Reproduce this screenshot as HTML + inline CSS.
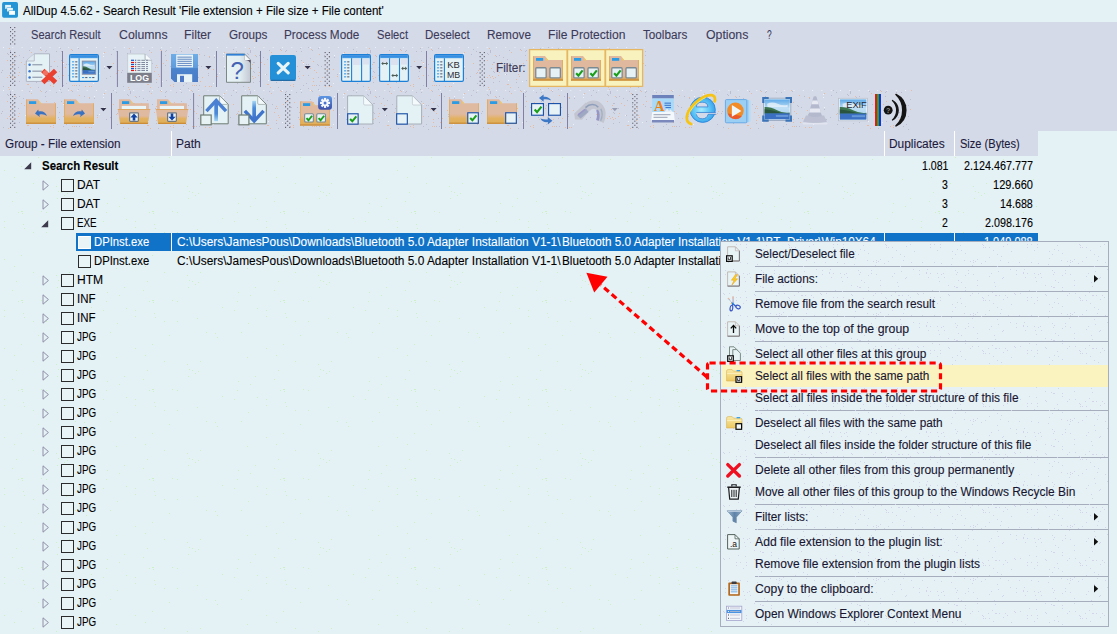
<!DOCTYPE html>
<html><head><meta charset="utf-8"><title>AllDup</title>
<style>
html,body{margin:0;padding:0;}
body{width:1117px;height:634px;overflow:hidden;background:#e4f1f5;position:relative;font-family:"Liberation Sans",sans-serif;}
#w{position:absolute;left:0;top:0;width:1117px;height:634px;overflow:hidden;}
#w div,#w svg,#w span{position:absolute;display:block;}
#w span{white-space:pre;line-height:1;-webkit-text-stroke:0.1px;transform-origin:0 0;}
</style></head><body><div id="w">
<div style="left:0px;top:0px;width:1117px;height:22px;background:#e4f1f5;"></div>
<div style="left:0px;top:22px;width:1117px;height:109px;background:#d5dae8;"></div>
<div style="left:0px;top:131px;width:1038px;height:25px;background:#d5dae8;"></div>
<div style="left:171px;top:131px;width:1px;height:25px;background:#fff;"></div>
<div style="left:884px;top:131px;width:1px;height:25px;background:#fff;"></div>
<div style="left:954px;top:131px;width:1px;height:25px;background:#fff;"></div>
<svg style="left:0;top:0" width="1117" height="634" viewBox="0 0 1117 634"><defs><pattern id="nz" width="120" height="41" patternUnits="userSpaceOnUse"><path d="M41 9h1v1h-1zM50 3h1v1h-1zM9 34h1v1h-1zM12 23h1v1h-1zM74 3h1v1h-1zM116 32h1v1h-1zM27 2h1v1h-1zM11 27h1v1h-1zM53 4h1v1h-1zM30 5h1v1h-1zM70 27h1v1h-1zM7 36h1v1h-1zM15 14h1v1h-1zM80 40h1v1h-1zM74 3h1v1h-1zM73 37h1v1h-1zM50 3h1v1h-1zM28 2h1v1h-1zM71 8h1v1h-1zM37 26h1v1h-1zM18 34h1v1h-1zM15 36h1v1h-1zM39 35h1v1h-1zM104 11h1v1h-1zM13 37h1v1h-1zM73 40h1v1h-1zM24 23h1v1h-1zM12 35h1v1h-1zM91 4h1v1h-1zM72 3h1v1h-1zM79 13h1v1h-1zM63 34h1v1h-1zM54 20h1v1h-1zM59 37h1v1h-1zM118 29h1v1h-1zM46 19h1v1h-1zM31 11h1v1h-1zM89 15h1v1h-1zM10 36h1v1h-1zM38 33h1v1h-1zM63 21h1v1h-1zM93 28h1v1h-1zM36 38h1v1h-1zM9 7h1v1h-1zM65 26h1v1h-1zM21 21h1v1h-1zM19 31h1v1h-1zM53 2h1v1h-1zM85 4h1v1h-1zM97 35h1v1h-1zM73 20h1v1h-1zM43 22h1v1h-1zM76 31h1v1h-1zM74 29h1v1h-1zM8 5h1v1h-1zM34 30h1v1h-1zM89 4h1v1h-1zM7 19h1v1h-1zM82 36h1v1h-1zM87 28h1v1h-1zM36 24h1v1h-1zM113 22h1v1h-1z" fill="#ebb088"/><path d="M2 29h1v1h-1zM45 10h1v1h-1zM78 7h1v1h-1zM63 3h1v1h-1zM27 18h1v1h-1zM16 15h1v1h-1zM50 25h1v1h-1zM117 31h1v1h-1zM10 10h1v1h-1zM57 25h1v1h-1zM70 17h1v1h-1zM113 8h1v1h-1zM104 27h1v1h-1zM110 35h1v1h-1zM35 26h1v1h-1zM45 24h1v1h-1zM29 9h1v1h-1zM10 11h1v1h-1zM19 14h1v1h-1zM84 14h1v1h-1zM1 31h1v1h-1zM106 37h1v1h-1zM23 16h1v1h-1zM36 0h1v1h-1zM18 26h1v1h-1zM68 23h1v1h-1zM78 36h1v1h-1zM40 8h1v1h-1zM88 32h1v1h-1zM79 3h1v1h-1zM58 35h1v1h-1zM50 25h1v1h-1zM51 25h1v1h-1zM13 30h1v1h-1zM81 25h1v1h-1zM7 12h1v1h-1zM8 13h1v1h-1zM56 10h1v1h-1zM14 21h1v1h-1zM76 3h1v1h-1zM13 0h1v1h-1zM72 9h1v1h-1zM68 6h1v1h-1zM46 39h1v1h-1zM3 4h1v1h-1zM111 13h1v1h-1zM78 24h1v1h-1zM19 40h1v1h-1zM32 22h1v1h-1zM77 23h1v1h-1zM60 7h1v1h-1zM14 31h1v1h-1zM59 30h1v1h-1zM61 19h1v1h-1zM10 9h1v1h-1zM13 21h1v1h-1zM94 16h1v1h-1zM61 10h1v1h-1zM66 1h1v1h-1zM26 33h1v1h-1zM46 9h1v1h-1zM88 34h1v1h-1zM117 1h1v1h-1zM97 33h1v1h-1zM38 5h1v1h-1zM89 16h1v1h-1zM66 23h1v1h-1zM116 10h1v1h-1zM45 14h1v1h-1zM68 34h1v1h-1z" fill="#b3b5c6"/><path d="M99 32h1v1h-1zM42 40h1v1h-1zM28 39h1v1h-1zM103 12h1v1h-1zM103 15h1v1h-1zM104 25h1v1h-1zM94 14h1v1h-1zM25 33h1v1h-1zM63 22h1v1h-1zM93 1h1v1h-1z" fill="#f6f8fb"/></pattern><pattern id="nm" width="97" height="53" patternUnits="userSpaceOnUse"><path d="M3 50h1v1h-1zM35 30h1v1h-1zM33 12h1v1h-1zM88 38h1v1h-1zM44 28h1v1h-1zM92 22h1v1h-1zM46 5h1v1h-1zM28 6h1v1h-1zM29 30h1v1h-1zM25 21h1v1h-1zM26 30h1v1h-1zM79 39h1v1h-1zM0 30h1v1h-1zM83 22h1v1h-1zM82 5h1v1h-1zM84 7h1v1h-1zM49 50h1v1h-1zM91 48h1v1h-1zM25 30h1v1h-1zM22 27h1v1h-1zM81 21h1v1h-1zM11 51h1v1h-1zM92 25h1v1h-1zM59 25h1v1h-1zM95 5h1v1h-1zM92 10h1v1h-1zM21 8h1v1h-1zM3 9h1v1h-1zM75 29h1v1h-1zM83 9h1v1h-1zM78 52h1v1h-1zM76 30h1v1h-1zM84 22h1v1h-1zM19 35h1v1h-1zM70 8h1v1h-1zM2 0h1v1h-1zM92 41h1v1h-1zM13 33h1v1h-1zM95 8h1v1h-1zM55 12h1v1h-1zM27 1h1v1h-1zM32 13h1v1h-1zM37 32h1v1h-1zM30 48h1v1h-1zM75 20h1v1h-1zM33 34h1v1h-1zM53 8h1v1h-1zM7 47h1v1h-1zM45 29h1v1h-1zM84 37h1v1h-1zM66 26h1v1h-1zM64 8h1v1h-1zM68 9h1v1h-1zM67 32h1v1h-1zM2 28h1v1h-1zM23 38h1v1h-1zM0 49h1v1h-1zM19 11h1v1h-1zM18 30h1v1h-1zM79 46h1v1h-1zM15 35h1v1h-1zM7 20h1v1h-1zM87 33h1v1h-1zM67 35h1v1h-1zM61 50h1v1h-1zM13 35h1v1h-1zM7 15h1v1h-1zM24 17h1v1h-1zM5 49h1v1h-1zM12 32h1v1h-1zM57 35h1v1h-1zM3 48h1v1h-1zM8 28h1v1h-1zM41 39h1v1h-1zM64 38h1v1h-1zM65 12h1v1h-1zM88 17h1v1h-1zM57 32h1v1h-1zM68 51h1v1h-1zM61 32h1v1h-1zM31 44h1v1h-1zM66 16h1v1h-1zM71 12h1v1h-1zM57 8h1v1h-1zM53 7h1v1h-1zM50 28h1v1h-1zM40 4h1v1h-1zM85 15h1v1h-1zM54 4h1v1h-1zM27 42h1v1h-1zM38 50h1v1h-1zM15 49h1v1h-1zM19 45h1v1h-1zM82 42h1v1h-1zM46 9h1v1h-1z" fill="#d3d4ea"/></pattern><pattern id="ng" width="131" height="89" patternUnits="userSpaceOnUse"><path d="M64 17h1v1h-1zM119 28h1v1h-1zM24 50h1v1h-1zM124 20h1v1h-1zM57 20h1v1h-1zM110 65h1v1h-1zM103 43h1v1h-1zM107 25h1v1h-1zM91 40h1v1h-1zM23 46h1v1h-1zM4 43h1v1h-1zM117 56h1v1h-1zM4 49h1v1h-1zM84 66h1v1h-1zM75 65h1v1h-1zM16 14h1v1h-1zM58 13h1v1h-1zM21 33h1v1h-1zM69 5h1v1h-1zM46 34h1v1h-1zM33 54h1v1h-1zM66 51h1v1h-1zM38 68h1v1h-1zM126 41h1v1h-1zM22 35h1v1h-1zM14 88h1v1h-1zM46 54h1v1h-1zM18 34h1v1h-1zM4 81h1v1h-1zM22 33h1v1h-1zM21 77h1v1h-1zM56 8h1v1h-1zM67 15h1v1h-1zM116 1h1v1h-1zM86 70h1v1h-1zM106 34h1v1h-1zM33 5h1v1h-1zM61 14h1v1h-1zM41 33h1v1h-1zM12 23h1v1h-1z" fill="#cdf0c4"/></pattern></defs><rect x="0" y="47" width="646" height="43" fill="url(#nz)" opacity=".75"/><path d="M3 47.500h642M3 90.500h908" stroke="#eef1f8" stroke-width="1" stroke-dasharray="1 8.300" fill="none"/><rect x="0" y="90" width="912" height="40" fill="url(#nz)" opacity=".75"/><rect x="0" y="157" width="720" height="76" fill="url(#ng)"/><rect x="0" y="251" width="720" height="383" fill="url(#ng)"/><rect x="720" y="157" width="318" height="76" fill="url(#ng)"/></svg>
<div style="left:76px;top:233px;width:962px;height:18px;background:#1173c8;"></div>
<div style="left:171px;top:233px;width:1px;height:18px;background:#fff;"></div>
<div style="left:884px;top:233px;width:1px;height:18px;background:#fff;"></div>
<div style="left:954px;top:233px;width:1px;height:18px;background:#fff;"></div>
<svg style="left:24px;top:162px" width="8" height="8" viewBox="0 0 8 8"><path d="M7.2 0.2V7.2H0.2Z" fill="#3c3a4c"/></svg>
<svg style="left:41.5px;top:180px" width="8" height="11" viewBox="0 0 8 11"><path d="M1 0.8V10.2L6.4 5.5Z" fill="none" stroke="#8f90a8" stroke-width="1"/></svg>
<div style="left:61px;top:179px;width:11px;height:11px;border:1px solid #2b2b2b;background:#e9f4f7"></div>
<svg style="left:41.5px;top:199px" width="8" height="11" viewBox="0 0 8 11"><path d="M1 0.8V10.2L6.4 5.5Z" fill="none" stroke="#8f90a8" stroke-width="1"/></svg>
<div style="left:61px;top:198px;width:11px;height:11px;border:1px solid #2b2b2b;background:#e9f4f7"></div>
<svg style="left:41px;top:220px" width="8" height="8" viewBox="0 0 8 8"><path d="M7.2 0.2V7.2H0.2Z" fill="#3c3a4c"/></svg>
<div style="left:61px;top:217px;width:11px;height:11px;border:1px solid #2b2b2b;background:#e9f4f7"></div>
<svg style="left:41.5px;top:275px" width="8" height="11" viewBox="0 0 8 11"><path d="M1 0.8V10.2L6.4 5.5Z" fill="none" stroke="#8f90a8" stroke-width="1"/></svg>
<div style="left:61px;top:274px;width:11px;height:11px;border:1px solid #2b2b2b;background:#e9f4f7"></div>
<svg style="left:41.5px;top:294px" width="8" height="11" viewBox="0 0 8 11"><path d="M1 0.8V10.2L6.4 5.5Z" fill="none" stroke="#8f90a8" stroke-width="1"/></svg>
<div style="left:61px;top:293px;width:11px;height:11px;border:1px solid #2b2b2b;background:#e9f4f7"></div>
<svg style="left:41.5px;top:313px" width="8" height="11" viewBox="0 0 8 11"><path d="M1 0.8V10.2L6.4 5.5Z" fill="none" stroke="#8f90a8" stroke-width="1"/></svg>
<div style="left:61px;top:312px;width:11px;height:11px;border:1px solid #2b2b2b;background:#e9f4f7"></div>
<svg style="left:41.5px;top:332px" width="8" height="11" viewBox="0 0 8 11"><path d="M1 0.8V10.2L6.4 5.5Z" fill="none" stroke="#8f90a8" stroke-width="1"/></svg>
<div style="left:61px;top:331px;width:11px;height:11px;border:1px solid #2b2b2b;background:#e9f4f7"></div>
<svg style="left:41.5px;top:351px" width="8" height="11" viewBox="0 0 8 11"><path d="M1 0.8V10.2L6.4 5.5Z" fill="none" stroke="#8f90a8" stroke-width="1"/></svg>
<div style="left:61px;top:350px;width:11px;height:11px;border:1px solid #2b2b2b;background:#e9f4f7"></div>
<svg style="left:41.5px;top:370px" width="8" height="11" viewBox="0 0 8 11"><path d="M1 0.8V10.2L6.4 5.5Z" fill="none" stroke="#8f90a8" stroke-width="1"/></svg>
<div style="left:61px;top:369px;width:11px;height:11px;border:1px solid #2b2b2b;background:#e9f4f7"></div>
<svg style="left:41.5px;top:389px" width="8" height="11" viewBox="0 0 8 11"><path d="M1 0.8V10.2L6.4 5.5Z" fill="none" stroke="#8f90a8" stroke-width="1"/></svg>
<div style="left:61px;top:388px;width:11px;height:11px;border:1px solid #2b2b2b;background:#e9f4f7"></div>
<svg style="left:41.5px;top:408px" width="8" height="11" viewBox="0 0 8 11"><path d="M1 0.8V10.2L6.4 5.5Z" fill="none" stroke="#8f90a8" stroke-width="1"/></svg>
<div style="left:61px;top:407px;width:11px;height:11px;border:1px solid #2b2b2b;background:#e9f4f7"></div>
<svg style="left:41.5px;top:427px" width="8" height="11" viewBox="0 0 8 11"><path d="M1 0.8V10.2L6.4 5.5Z" fill="none" stroke="#8f90a8" stroke-width="1"/></svg>
<div style="left:61px;top:426px;width:11px;height:11px;border:1px solid #2b2b2b;background:#e9f4f7"></div>
<svg style="left:41.5px;top:446px" width="8" height="11" viewBox="0 0 8 11"><path d="M1 0.8V10.2L6.4 5.5Z" fill="none" stroke="#8f90a8" stroke-width="1"/></svg>
<div style="left:61px;top:445px;width:11px;height:11px;border:1px solid #2b2b2b;background:#e9f4f7"></div>
<svg style="left:41.5px;top:465px" width="8" height="11" viewBox="0 0 8 11"><path d="M1 0.8V10.2L6.4 5.5Z" fill="none" stroke="#8f90a8" stroke-width="1"/></svg>
<div style="left:61px;top:464px;width:11px;height:11px;border:1px solid #2b2b2b;background:#e9f4f7"></div>
<svg style="left:41.5px;top:484px" width="8" height="11" viewBox="0 0 8 11"><path d="M1 0.8V10.2L6.4 5.5Z" fill="none" stroke="#8f90a8" stroke-width="1"/></svg>
<div style="left:61px;top:483px;width:11px;height:11px;border:1px solid #2b2b2b;background:#e9f4f7"></div>
<svg style="left:41.5px;top:503px" width="8" height="11" viewBox="0 0 8 11"><path d="M1 0.8V10.2L6.4 5.5Z" fill="none" stroke="#8f90a8" stroke-width="1"/></svg>
<div style="left:61px;top:502px;width:11px;height:11px;border:1px solid #2b2b2b;background:#e9f4f7"></div>
<svg style="left:41.5px;top:522px" width="8" height="11" viewBox="0 0 8 11"><path d="M1 0.8V10.2L6.4 5.5Z" fill="none" stroke="#8f90a8" stroke-width="1"/></svg>
<div style="left:61px;top:521px;width:11px;height:11px;border:1px solid #2b2b2b;background:#e9f4f7"></div>
<svg style="left:41.5px;top:541px" width="8" height="11" viewBox="0 0 8 11"><path d="M1 0.8V10.2L6.4 5.5Z" fill="none" stroke="#8f90a8" stroke-width="1"/></svg>
<div style="left:61px;top:540px;width:11px;height:11px;border:1px solid #2b2b2b;background:#e9f4f7"></div>
<svg style="left:41.5px;top:560px" width="8" height="11" viewBox="0 0 8 11"><path d="M1 0.8V10.2L6.4 5.5Z" fill="none" stroke="#8f90a8" stroke-width="1"/></svg>
<div style="left:61px;top:559px;width:11px;height:11px;border:1px solid #2b2b2b;background:#e9f4f7"></div>
<svg style="left:41.5px;top:579px" width="8" height="11" viewBox="0 0 8 11"><path d="M1 0.8V10.2L6.4 5.5Z" fill="none" stroke="#8f90a8" stroke-width="1"/></svg>
<div style="left:61px;top:578px;width:11px;height:11px;border:1px solid #2b2b2b;background:#e9f4f7"></div>
<svg style="left:41.5px;top:598px" width="8" height="11" viewBox="0 0 8 11"><path d="M1 0.8V10.2L6.4 5.5Z" fill="none" stroke="#8f90a8" stroke-width="1"/></svg>
<div style="left:61px;top:597px;width:11px;height:11px;border:1px solid #2b2b2b;background:#e9f4f7"></div>
<svg style="left:41.5px;top:617px" width="8" height="11" viewBox="0 0 8 11"><path d="M1 0.8V10.2L6.4 5.5Z" fill="none" stroke="#8f90a8" stroke-width="1"/></svg>
<div style="left:61px;top:616px;width:11px;height:11px;border:1px solid #2b2b2b;background:#e9f4f7"></div>
<div style="left:78px;top:236px;width:11px;height:11px;border:1px solid #fff;background:#e9f4f7"></div>
<div style="left:78px;top:255px;width:11px;height:11px;border:1px solid #2b2b2b;background:#e9f4f7"></div>
<div style="left:720px;top:241px;width:387px;height:384px;background:#e5f1f5;border:1px solid #a6aebd;z-index:5"></div>
<div style="left:722px;top:365px;width:386px;height:22px;background:#fbf3bf;z-index:6;"></div>
<div style="left:755px;top:266px;width:353px;height:1px;background:#a6aebd;z-index:6;"></div>
<svg style="left:1094px;top:275px;z-index:7" width="5" height="8" viewBox="0 0 5 8"><path d="M0 0L4.2 3.8L0 7.6Z" fill="#111"/></svg>
<div style="left:755px;top:291px;width:353px;height:1px;background:#a6aebd;z-index:6;"></div>
<div style="left:755px;top:316px;width:353px;height:1px;background:#a6aebd;z-index:6;"></div>
<div style="left:755px;top:341px;width:353px;height:1px;background:#a6aebd;z-index:6;"></div>
<div style="left:755px;top:410px;width:353px;height:1px;background:#a6aebd;z-index:6;"></div>
<div style="left:755px;top:457px;width:353px;height:1px;background:#a6aebd;z-index:6;"></div>
<div style="left:755px;top:504px;width:353px;height:1px;background:#a6aebd;z-index:6;"></div>
<svg style="left:1094px;top:513px;z-index:7" width="5" height="8" viewBox="0 0 5 8"><path d="M0 0L4.2 3.8L0 7.6Z" fill="#111"/></svg>
<div style="left:755px;top:529px;width:353px;height:1px;background:#a6aebd;z-index:6;"></div>
<svg style="left:1094px;top:538px;z-index:7" width="5" height="8" viewBox="0 0 5 8"><path d="M0 0L4.2 3.8L0 7.6Z" fill="#111"/></svg>
<div style="left:755px;top:576px;width:353px;height:1px;background:#a6aebd;z-index:6;"></div>
<svg style="left:1094px;top:585px;z-index:7" width="5" height="8" viewBox="0 0 5 8"><path d="M0 0L4.2 3.8L0 7.6Z" fill="#111"/></svg>
<div style="left:755px;top:601px;width:353px;height:1px;background:#a6aebd;z-index:6;"></div>
<svg style="left:0;top:0;z-index:20" width="1117" height="634" viewBox="0 0 1117 634">
<rect x="707.5" y="363" width="233" height="28" rx="2" fill="none" stroke="#f00" stroke-width="3.2" stroke-dasharray="6.2 3.8"/>
<line x1="707" y1="377" x2="601" y2="285" stroke="#f00" stroke-width="3.2" stroke-dasharray="6.2 3.8"/>
<path d="M586.4 272.7L607.5 276.8L594.2 292.6Z" fill="#f00"/>
</svg>
<svg style="left:0;top:0;z-index:6" width="1117" height="634" viewBox="0 0 1117 634"><rect x="722" y="243" width="386" height="122" fill="url(#nm)"/><rect x="722" y="387" width="386" height="238" fill="url(#nm)"/></svg><svg style="left:0;top:0" width="1117" height="160" viewBox="0 0 1117 160"><defs>
<linearGradient id="fg" x1="0" y1="0" x2="0" y2="1"><stop offset="0" stop-color="#e0b9a1"/><stop offset=".6" stop-color="#e0b9a1"/><stop offset=".78" stop-color="#e2b262"/><stop offset="1" stop-color="#e0ae58"/></linearGradient>
<linearGradient id="fg3" x1="0" y1="0" x2="0" y2="1"><stop offset="0" stop-color="#e0b9a1"/><stop offset=".46" stop-color="#e0b9a1"/><stop offset=".64" stop-color="#e2b262"/><stop offset="1" stop-color="#e0ae58"/></linearGradient>
<linearGradient id="fg2" x1="0" y1="0" x2="0" y2="1"><stop offset="0" stop-color="#dfb9a0"/><stop offset=".8" stop-color="#dfb79a"/><stop offset=".93" stop-color="#dfa85c"/><stop offset="1" stop-color="#d89840"/></linearGradient>
<linearGradient id="tb" x1="0" y1="0" x2="0" y2="1"><stop offset="0" stop-color="#2783dc"/><stop offset="1" stop-color="#4a9fe8"/></linearGradient>
<linearGradient id="sky" x1="0" y1="0" x2="0" y2="1"><stop offset="0" stop-color="#5da9e8"/><stop offset=".45" stop-color="#bfdff4"/><stop offset="1" stop-color="#9fd0f0"/></linearGradient>
<linearGradient id="gear" x1="0" y1="0" x2="0" y2="1"><stop offset="0" stop-color="#5d97e4"/><stop offset="1" stop-color="#3c4fa8"/></linearGradient>
<linearGradient id="flop" x1="0" y1="0" x2="0" y2="1"><stop offset="0" stop-color="#6fadE6"/><stop offset=".5" stop-color="#5f9bdc"/><stop offset=".52" stop-color="#4b84cc"/><stop offset="1" stop-color="#4a7cc6"/></linearGradient>
<linearGradient id="arr" x1="0" y1="0" x2="0" y2="1"><stop offset="0" stop-color="#4a7fd2"/><stop offset=".6" stop-color="#4a8ad8"/><stop offset="1" stop-color="#a8d8f4"/></linearGradient>
<linearGradient id="arr2" x1="0" y1="0" x2="0" y2="1"><stop offset="0" stop-color="#a8d8f4"/><stop offset=".4" stop-color="#4a8ad8"/><stop offset="1" stop-color="#3f74cc"/></linearGradient>
<linearGradient id="yf" x1="0" y1="0" x2="0" y2="1"><stop offset="0" stop-color="#f8e9a8"/><stop offset="1" stop-color="#ecc860"/></linearGradient>
<linearGradient id="fun" x1="0" y1="0" x2="1" y2="0"><stop offset="0" stop-color="#9fb8cf"/><stop offset=".5" stop-color="#5f83a8"/><stop offset="1" stop-color="#8aa6c2"/></linearGradient>
<linearGradient id="qd" x1="0" y1="0" x2="1" y2="0"><stop offset="0" stop-color="#e6f2f5"/><stop offset=".55" stop-color="#e2eef2"/><stop offset="1" stop-color="#c4c8d4"/></linearGradient>
<radialGradient id="ieg" cx=".45" cy=".5" r=".6"><stop offset="0" stop-color="#a6ecff"/><stop offset=".55" stop-color="#5cc4f6"/><stop offset="1" stop-color="#2e9ae8"/></radialGradient>
</defs><rect x="2.1" y="2.1" width="15.9" height="15.7" rx="1.8" fill="#2494d4"/><rect x="5.1" y="4.9" width="5.9" height="3.9" fill="#e4f2fa"/><rect x="6.700" y="7.500" width="6.500" height="4.400" fill="#2494d4"/><rect x="7.100" y="7.900" width="5.800" height="3.600" fill="#eaf5fb"/><rect x="8.700" y="10.400" width="6.600" height="4.700" fill="#2494d4"/><rect x="9.100" y="10.800" width="5.900" height="4" fill="#fbfdfe"/><g fill="#5c5c68"><rect x="10" y="27" width="1.1" height="1.1"/><rect x="14.2" y="27" width="1.1" height="1.1"/><rect x="12.1" y="29.05" width="1.1" height="1.1"/><rect x="10" y="31.1" width="1.1" height="1.1"/><rect x="14.2" y="31.1" width="1.1" height="1.1"/><rect x="12.1" y="33.15" width="1.1" height="1.1"/><rect x="10" y="35.2" width="1.1" height="1.1"/><rect x="14.2" y="35.2" width="1.1" height="1.1"/><rect x="12.1" y="37.25" width="1.1" height="1.1"/><rect x="10" y="39.3" width="1.1" height="1.1"/><rect x="14.2" y="39.3" width="1.1" height="1.1"/><rect x="12.1" y="41.35" width="1.1" height="1.1"/><rect x="10" y="43.4" width="1.1" height="1.1"/><rect x="14.2" y="43.4" width="1.1" height="1.1"/></g><g fill="#5c5c68"><rect x="10" y="52" width="1.1" height="1.1"/><rect x="14.2" y="52" width="1.1" height="1.1"/><rect x="12.1" y="54.05" width="1.1" height="1.1"/><rect x="10" y="56.1" width="1.1" height="1.1"/><rect x="14.2" y="56.1" width="1.1" height="1.1"/><rect x="12.1" y="58.15" width="1.1" height="1.1"/><rect x="10" y="60.2" width="1.1" height="1.1"/><rect x="14.2" y="60.2" width="1.1" height="1.1"/><rect x="12.1" y="62.25" width="1.1" height="1.1"/><rect x="10" y="64.3" width="1.1" height="1.1"/><rect x="14.2" y="64.3" width="1.1" height="1.1"/><rect x="12.1" y="66.35" width="1.1" height="1.1"/><rect x="10" y="68.4" width="1.1" height="1.1"/><rect x="14.2" y="68.4" width="1.1" height="1.1"/><rect x="12.1" y="70.45" width="1.1" height="1.1"/><rect x="10" y="72.5" width="1.1" height="1.1"/><rect x="14.2" y="72.5" width="1.1" height="1.1"/><rect x="12.1" y="74.55" width="1.1" height="1.1"/><rect x="10" y="76.6" width="1.1" height="1.1"/><rect x="14.2" y="76.6" width="1.1" height="1.1"/><rect x="12.1" y="78.65" width="1.1" height="1.1"/><rect x="10" y="80.7" width="1.1" height="1.1"/><rect x="14.2" y="80.7" width="1.1" height="1.1"/><rect x="12.1" y="82.75" width="1.1" height="1.1"/><rect x="10" y="84.8" width="1.1" height="1.1"/><rect x="14.2" y="84.8" width="1.1" height="1.1"/></g><g fill="#5c5c68"><rect x="10" y="94" width="1.1" height="1.1"/><rect x="14.2" y="94" width="1.1" height="1.1"/><rect x="12.1" y="96.05" width="1.1" height="1.1"/><rect x="10" y="98.1" width="1.1" height="1.1"/><rect x="14.2" y="98.1" width="1.1" height="1.1"/><rect x="12.1" y="100.15" width="1.1" height="1.1"/><rect x="10" y="102.2" width="1.1" height="1.1"/><rect x="14.2" y="102.2" width="1.1" height="1.1"/><rect x="12.1" y="104.25" width="1.1" height="1.1"/><rect x="10" y="106.3" width="1.1" height="1.1"/><rect x="14.2" y="106.3" width="1.1" height="1.1"/><rect x="12.1" y="108.35" width="1.1" height="1.1"/><rect x="10" y="110.4" width="1.1" height="1.1"/><rect x="14.2" y="110.4" width="1.1" height="1.1"/><rect x="12.1" y="112.45" width="1.1" height="1.1"/><rect x="10" y="114.5" width="1.1" height="1.1"/><rect x="14.2" y="114.5" width="1.1" height="1.1"/><rect x="12.1" y="116.55" width="1.1" height="1.1"/><rect x="10" y="118.6" width="1.1" height="1.1"/><rect x="14.2" y="118.6" width="1.1" height="1.1"/><rect x="12.1" y="120.65" width="1.1" height="1.1"/><rect x="10" y="122.7" width="1.1" height="1.1"/><rect x="14.2" y="122.7" width="1.1" height="1.1"/><rect x="12.1" y="124.75" width="1.1" height="1.1"/><rect x="10" y="126.8" width="1.1" height="1.1"/><rect x="14.2" y="126.8" width="1.1" height="1.1"/></g><g fill="#5c5c68"><rect x="324.6" y="52" width="1.1" height="1.1"/><rect x="328.8" y="52" width="1.1" height="1.1"/><rect x="326.7" y="54.05" width="1.1" height="1.1"/><rect x="324.6" y="56.1" width="1.1" height="1.1"/><rect x="328.8" y="56.1" width="1.1" height="1.1"/><rect x="326.7" y="58.15" width="1.1" height="1.1"/><rect x="324.6" y="60.2" width="1.1" height="1.1"/><rect x="328.8" y="60.2" width="1.1" height="1.1"/><rect x="326.7" y="62.25" width="1.1" height="1.1"/><rect x="324.6" y="64.3" width="1.1" height="1.1"/><rect x="328.8" y="64.3" width="1.1" height="1.1"/><rect x="326.7" y="66.35" width="1.1" height="1.1"/><rect x="324.6" y="68.4" width="1.1" height="1.1"/><rect x="328.8" y="68.4" width="1.1" height="1.1"/><rect x="326.7" y="70.45" width="1.1" height="1.1"/><rect x="324.6" y="72.5" width="1.1" height="1.1"/><rect x="328.8" y="72.5" width="1.1" height="1.1"/><rect x="326.7" y="74.55" width="1.1" height="1.1"/><rect x="324.6" y="76.6" width="1.1" height="1.1"/><rect x="328.8" y="76.6" width="1.1" height="1.1"/><rect x="326.7" y="78.65" width="1.1" height="1.1"/><rect x="324.6" y="80.7" width="1.1" height="1.1"/><rect x="328.8" y="80.7" width="1.1" height="1.1"/><rect x="326.7" y="82.75" width="1.1" height="1.1"/><rect x="324.6" y="84.8" width="1.1" height="1.1"/><rect x="328.8" y="84.8" width="1.1" height="1.1"/></g><g fill="#5c5c68"><rect x="479.6" y="52" width="1.1" height="1.1"/><rect x="483.8" y="52" width="1.1" height="1.1"/><rect x="481.7" y="54.05" width="1.1" height="1.1"/><rect x="479.6" y="56.1" width="1.1" height="1.1"/><rect x="483.8" y="56.1" width="1.1" height="1.1"/><rect x="481.7" y="58.15" width="1.1" height="1.1"/><rect x="479.6" y="60.2" width="1.1" height="1.1"/><rect x="483.8" y="60.2" width="1.1" height="1.1"/><rect x="481.7" y="62.25" width="1.1" height="1.1"/><rect x="479.6" y="64.3" width="1.1" height="1.1"/><rect x="483.8" y="64.3" width="1.1" height="1.1"/><rect x="481.7" y="66.35" width="1.1" height="1.1"/><rect x="479.6" y="68.4" width="1.1" height="1.1"/><rect x="483.8" y="68.4" width="1.1" height="1.1"/><rect x="481.7" y="70.45" width="1.1" height="1.1"/><rect x="479.6" y="72.5" width="1.1" height="1.1"/><rect x="483.8" y="72.5" width="1.1" height="1.1"/><rect x="481.7" y="74.55" width="1.1" height="1.1"/><rect x="479.6" y="76.6" width="1.1" height="1.1"/><rect x="483.8" y="76.6" width="1.1" height="1.1"/><rect x="481.7" y="78.65" width="1.1" height="1.1"/><rect x="479.6" y="80.7" width="1.1" height="1.1"/><rect x="483.8" y="80.7" width="1.1" height="1.1"/><rect x="481.7" y="82.75" width="1.1" height="1.1"/><rect x="479.6" y="84.8" width="1.1" height="1.1"/><rect x="483.8" y="84.8" width="1.1" height="1.1"/></g><g fill="#5c5c68"><rect x="285" y="94" width="1.1" height="1.1"/><rect x="289.2" y="94" width="1.1" height="1.1"/><rect x="287.1" y="96.05" width="1.1" height="1.1"/><rect x="285" y="98.1" width="1.1" height="1.1"/><rect x="289.2" y="98.1" width="1.1" height="1.1"/><rect x="287.1" y="100.15" width="1.1" height="1.1"/><rect x="285" y="102.2" width="1.1" height="1.1"/><rect x="289.2" y="102.2" width="1.1" height="1.1"/><rect x="287.1" y="104.25" width="1.1" height="1.1"/><rect x="285" y="106.3" width="1.1" height="1.1"/><rect x="289.2" y="106.3" width="1.1" height="1.1"/><rect x="287.1" y="108.35" width="1.1" height="1.1"/><rect x="285" y="110.4" width="1.1" height="1.1"/><rect x="289.2" y="110.4" width="1.1" height="1.1"/><rect x="287.1" y="112.45" width="1.1" height="1.1"/><rect x="285" y="114.5" width="1.1" height="1.1"/><rect x="289.2" y="114.5" width="1.1" height="1.1"/><rect x="287.1" y="116.55" width="1.1" height="1.1"/><rect x="285" y="118.6" width="1.1" height="1.1"/><rect x="289.2" y="118.6" width="1.1" height="1.1"/><rect x="287.1" y="120.65" width="1.1" height="1.1"/><rect x="285" y="122.7" width="1.1" height="1.1"/><rect x="289.2" y="122.7" width="1.1" height="1.1"/><rect x="287.1" y="124.75" width="1.1" height="1.1"/><rect x="285" y="126.8" width="1.1" height="1.1"/><rect x="289.2" y="126.8" width="1.1" height="1.1"/></g><g fill="#5c5c68"><rect x="632.2" y="94" width="1.1" height="1.1"/><rect x="636.4" y="94" width="1.1" height="1.1"/><rect x="634.3" y="96.05" width="1.1" height="1.1"/><rect x="632.2" y="98.1" width="1.1" height="1.1"/><rect x="636.4" y="98.1" width="1.1" height="1.1"/><rect x="634.3" y="100.15" width="1.1" height="1.1"/><rect x="632.2" y="102.2" width="1.1" height="1.1"/><rect x="636.4" y="102.2" width="1.1" height="1.1"/><rect x="634.3" y="104.25" width="1.1" height="1.1"/><rect x="632.2" y="106.3" width="1.1" height="1.1"/><rect x="636.4" y="106.3" width="1.1" height="1.1"/><rect x="634.3" y="108.35" width="1.1" height="1.1"/><rect x="632.2" y="110.4" width="1.1" height="1.1"/><rect x="636.4" y="110.4" width="1.1" height="1.1"/><rect x="634.3" y="112.45" width="1.1" height="1.1"/><rect x="632.2" y="114.5" width="1.1" height="1.1"/><rect x="636.4" y="114.5" width="1.1" height="1.1"/><rect x="634.3" y="116.55" width="1.1" height="1.1"/><rect x="632.2" y="118.6" width="1.1" height="1.1"/><rect x="636.4" y="118.6" width="1.1" height="1.1"/><rect x="634.3" y="120.65" width="1.1" height="1.1"/><rect x="632.2" y="122.7" width="1.1" height="1.1"/><rect x="636.4" y="122.7" width="1.1" height="1.1"/><rect x="634.3" y="124.75" width="1.1" height="1.1"/><rect x="632.2" y="126.8" width="1.1" height="1.1"/><rect x="636.4" y="126.8" width="1.1" height="1.1"/></g><rect x="62" y="51" width="1" height="36" fill="#8080a4"/><rect x="116.9" y="51" width="1" height="36" fill="#8080a4"/><rect x="160.9" y="51" width="1" height="36" fill="#8080a4"/><rect x="216" y="51" width="1" height="36" fill="#8080a4"/><rect x="260" y="51" width="1" height="36" fill="#8080a4"/><rect x="426" y="51" width="1" height="36" fill="#8080a4"/><rect x="111" y="93" width="1" height="36" fill="#8080a4"/><rect x="193.1" y="93" width="1" height="36" fill="#8080a4"/><rect x="337" y="93" width="1" height="36" fill="#8080a4"/><rect x="441" y="93" width="1" height="36" fill="#8080a4"/><rect x="523" y="93" width="1" height="36" fill="#8080a4"/><rect x="567" y="93" width="1" height="36" fill="#8080a4"/><path d="M106.4 66h6l-3 3.3z" fill="#32324a"/><path d="M205.4 66h6l-3 3.3z" fill="#32324a"/><path d="M304.6 66h6l-3 3.3z" fill="#32324a"/><path d="M416.2 66h6l-3 3.3z" fill="#32324a"/><path d="M100.4 108h6l-3 3.3z" fill="#32324a"/><path d="M381.8 108h6l-3 3.3z" fill="#32324a"/><path d="M430.6 108h6l-3 3.3z" fill="#32324a"/><path d="M611.8 108h6l-3 3.3z" fill="#9a9eb4"/><path d="M34.3 53.8h15.2v27.6h-23.2v-20.4z" fill="#e5f2f5" stroke="#aeb3c2" stroke-width="1"/><path d="M34.3 53.8v7.2h-8" fill="#dfe9f0" stroke="#aeb3c2" stroke-width=".8"/><circle cx="29.6" cy="64.8" r="1.25" fill="#3a74d0"/><rect x="32.3" y="64.0" width="10" height="1.4" fill="#6d7790" opacity=".6"/><circle cx="29.6" cy="71.3" r="1.25" fill="#3a74d0"/><rect x="32.3" y="70.5" width="10" height="1.4" fill="#6d7790" opacity=".6"/><circle cx="29.6" cy="77.4" r="1.25" fill="#3a74d0"/><rect x="32.3" y="76.60000000000001" width="10" height="1.4" fill="#6d7790" opacity=".6"/><path d="M42.8 70.6l12.8 12M55.6 70.6l-12.8 12" stroke="#e9402f" stroke-width="4.8" stroke-linecap="butt"/><circle cx="45.500" cy="72.800" r="2.600" fill="#f49a8c" opacity=".55"/><rect x="69.6" y="54.6" width="28.8" height="26.8" rx="1.3" fill="#e5f2f5" stroke="#1b80d8" stroke-width="1.2"/><rect x="70.2" y="55.2" width="27.6" height="3" fill="url(#tb)"/><rect x="78.55" y="58.2" width="1.1" height="22.8" fill="#1b80d8"/><rect x="72" y="61.3" width="2.2" height="1.1" fill="#3a9be8"/><rect x="75.2" y="61.3" width="2.2" height="1.1" fill="#5a5f72"/><rect x="72" y="64.3" width="2.2" height="1.1" fill="#3a9be8"/><rect x="75.2" y="64.3" width="2.2" height="1.1" fill="#5a5f72"/><rect x="72" y="67.3" width="2.2" height="1.1" fill="#3a9be8"/><rect x="75.2" y="67.3" width="2.2" height="1.1" fill="#5a5f72"/><rect x="72" y="70.3" width="2.2" height="1.1" fill="#3a9be8"/><rect x="75.2" y="70.3" width="2.2" height="1.1" fill="#5a5f72"/><rect x="72" y="73.3" width="2.2" height="1.1" fill="#3a9be8"/><rect x="75.2" y="73.3" width="2.2" height="1.1" fill="#5a5f72"/><rect x="72" y="76.3" width="2.2" height="1.1" fill="#3a9be8"/><rect x="75.2" y="76.3" width="2.2" height="1.1" fill="#5a5f72"/><rect x="81.8" y="60.6" width="14.4" height="14.2" fill="#8d93a8"/><rect x="82.8" y="61.6" width="12.4" height="12.2" fill="url(#sky)"/><path d="M84.04 64.28q2.48 -1.46 5.21 0t4.96 0.61v1.46h-9.92z" fill="#eef6fb" opacity=".75"/><path d="M82.8 66.24q2.73 -0.24 6.2 1.95t6.2 1.46v1.22h-12.4z" fill="#3c7450"/><path d="M82.8 67.7q3.72 0.24 8.68 2.44h-8.68z" fill="#2a5340"/><path d="M82.8 70.14h12.4v3.66h-12.4z" fill="#3a6fc2"/><path d="M88.38 71.12h6.2v1.22h-6.2z" fill="#7fb2e6" opacity=".6"/><rect x="82" y="77" width="2.2" height="1.1" fill="#3a9be8"/><rect x="85.2" y="77" width="2.2" height="1.1" fill="#5a5f72"/><rect x="89" y="77" width="2.2" height="1.1" fill="#3a9be8"/><rect x="92.2" y="77" width="2.2" height="1.1" fill="#5a5f72"/><path d="M127.6 54h17.5l6.5 6.2v12.8h-24z" fill="#e7f3f6" stroke="#c2c8d0" stroke-width=".8"/><path d="M145.1 54v5q0 1.2 1.2 1.2h5.3" fill="#f6fbfc" stroke="#9aa3ad" stroke-width=".8"/><rect x="131" y="59.699999999999996" width="3" height="1.2" fill="#1b50c4"/><rect x="135.2" y="59.699999999999996" width="1" height="1.2" fill="#1b50c4"/><rect x="137.4" y="59.8" width="3" height="1" fill="#8088a0"/><rect x="141.4" y="59.8" width="3.6" height="1" fill="#8088a0"/><rect x="146" y="59.8" width="2" height="1" fill="#8088a0"/><rect x="131" y="61.9" width="3" height="1.2" fill="#e01414"/><rect x="135.2" y="61.9" width="1" height="1.2" fill="#e01414"/><rect x="137.4" y="62.0" width="3" height="1" fill="#8088a0"/><rect x="141.4" y="62.0" width="3.6" height="1" fill="#8088a0"/><rect x="146" y="62.0" width="2" height="1" fill="#8088a0"/><rect x="131" y="63.9" width="3" height="1.2" fill="#1b50c4"/><rect x="135.2" y="63.9" width="1" height="1.2" fill="#1b50c4"/><rect x="137.4" y="64.0" width="3" height="1" fill="#8088a0"/><rect x="141.4" y="64.0" width="3.6" height="1" fill="#8088a0"/><rect x="146" y="64.0" width="2" height="1" fill="#8088a0"/><rect x="131" y="66.0" width="3" height="1.2" fill="#e01414"/><rect x="135.2" y="66.0" width="1" height="1.2" fill="#e01414"/><rect x="137.4" y="66.1" width="3" height="1" fill="#8088a0"/><rect x="141.4" y="66.1" width="3.6" height="1" fill="#8088a0"/><rect x="146" y="66.1" width="2" height="1" fill="#8088a0"/><rect x="131" y="68.0" width="3" height="1.2" fill="#1b50c4"/><rect x="135.2" y="68.0" width="1" height="1.2" fill="#1b50c4"/><rect x="137.4" y="68.1" width="3" height="1" fill="#8088a0"/><rect x="141.4" y="68.1" width="3.6" height="1" fill="#8088a0"/><rect x="146" y="68.1" width="2" height="1" fill="#8088a0"/><rect x="131" y="69.9" width="3" height="1.2" fill="#e01414"/><rect x="135.2" y="69.9" width="1" height="1.2" fill="#e01414"/><rect x="137.4" y="70.0" width="3" height="1" fill="#8088a0"/><rect x="141.4" y="70.0" width="3.6" height="1" fill="#8088a0"/><rect x="146" y="70.0" width="2" height="1" fill="#8088a0"/><rect x="127.2" y="72.9" width="24.6" height="9.9" fill="#7c7e8a"/><text x="139.5" y="81.2" font-family="Liberation Sans,sans-serif" font-size="9" font-weight="700" fill="#fff" text-anchor="middle" textLength="19" lengthAdjust="spacingAndGlyphs">LOG</text><path d="M171 54h27v28h-23.6l-3.4-3.6z" fill="url(#flop)"/><rect x="176.2" y="54.6" width="16.8" height="12.8" fill="#eaf4f8"/><rect x="177.4" y="56.6" width="14.4" height="1.1" fill="#6f93c6"/><rect x="177.4" y="58.7" width="14.4" height="1.1" fill="#6f93c6"/><rect x="177.4" y="60.8" width="14.4" height="1.1" fill="#6f93c6"/><rect x="177.4" y="62.9" width="14.4" height="1.1" fill="#6f93c6"/><rect x="177.4" y="65" width="14.4" height="1.1" fill="#6f93c6"/><rect x="177" y="74.2" width="15.2" height="7.8" fill="#e8f3f7"/><rect x="180" y="75.8" width="4" height="6.2" fill="#4a74c4"/><path d="M226.5 54.1h18.2l5.8 6v22.2h-24z" fill="url(#qd)" stroke="#7c8884" stroke-width="1"/><rect x="226.4" y="53.8" width="18.6" height="1.8" fill="#2f7fd6"/><path d="M244.7 54.4l5.8 5.9v3.2c-1.2-2.6-3-3.6-5.8-3.6z" fill="#5b5264"/><path d="M244.7 54.4v5.5h5.6z" fill="#f2f7f9"/><text x="237.3" y="79" font-family="Liberation Sans,sans-serif" font-size="24" fill="#4462b4" text-anchor="middle">?</text><rect x="270" y="55" width="26" height="25.8" rx="2.2" fill="#2390d8"/><rect x="270.6" y="79.8" width="24.8" height="1" fill="#1b5f9a"/><path d="M278.2 63.400l10 9.400M288.200 63.400l-10 9.400" stroke="#e9f4f6" stroke-width="3.200" stroke-linecap="round"/><rect x="341.6" y="54.6" width="28.8" height="26.8" rx="1.3" fill="#e5f2f5" stroke="#1b80d8" stroke-width="1.2"/><rect x="342.2" y="55.2" width="27.6" height="3" fill="url(#tb)"/><rect x="351.05" y="58.2" width="1.1" height="22.8" fill="#1b80d8"/><rect x="361.05" y="58.2" width="1.1" height="22.8" fill="#1b80d8"/><rect x="344" y="61.3" width="2.2" height="1.1" fill="#3a9be8"/><rect x="347.2" y="61.3" width="2.2" height="1.1" fill="#5a5f72"/><rect x="344" y="64.3" width="2.2" height="1.1" fill="#3a9be8"/><rect x="347.2" y="64.3" width="2.2" height="1.1" fill="#5a5f72"/><rect x="344" y="67.3" width="2.2" height="1.1" fill="#3a9be8"/><rect x="347.2" y="67.3" width="2.2" height="1.1" fill="#5a5f72"/><rect x="344" y="70.3" width="2.2" height="1.1" fill="#3a9be8"/><rect x="347.2" y="70.3" width="2.2" height="1.1" fill="#5a5f72"/><rect x="344" y="73.3" width="2.2" height="1.1" fill="#3a9be8"/><rect x="347.2" y="73.3" width="2.2" height="1.1" fill="#5a5f72"/><rect x="344" y="76.3" width="2.2" height="1.1" fill="#3a9be8"/><rect x="347.2" y="76.3" width="2.2" height="1.1" fill="#5a5f72"/><rect x="352.8" y="59" width="8" height="6" fill="#d8dcec" opacity=".8"/><rect x="362.8" y="59" width="6.6" height="5.5" fill="#d8dcec" opacity=".8"/><rect x="379.6" y="54.6" width="28.8" height="26.8" rx="1.3" fill="#e5f2f5" stroke="#1b80d8" stroke-width="1.2"/><rect x="380.2" y="55.2" width="27.6" height="3" fill="url(#tb)"/><rect x="389.05" y="58.2" width="1.1" height="22.8" fill="#1b80d8"/><rect x="398.95" y="58.2" width="1.1" height="22.8" fill="#1b80d8"/><rect x="380.8" y="59" width="8" height="3.5" fill="#d8dcec" opacity=".8"/><rect x="390.8" y="59" width="8" height="6" fill="#d8dcec" opacity=".8"/><rect x="400.8" y="59" width="6.6" height="5.5" fill="#d8dcec" opacity=".8"/><path d="M381.2 63.5l2-1.8v3.6z M388.2 63.5l-2-1.8v3.6z" fill="#4d5c55"/><rect x="382.7" y="62.95" width="4" height="1.1" fill="#4d5c55"/><path d="M391.3 75.5l2-1.8v3.6z M398.2 75.5l-2-1.8v3.6z" fill="#4d5c55"/><rect x="392.8" y="74.95" width="3.9" height="1.1" fill="#4d5c55"/><path d="M401.2 68.4l2-1.8v3.6z M407.2 68.4l-2-1.8v3.6z" fill="#4d5c55"/><rect x="402.7" y="67.85" width="3" height="1.1" fill="#4d5c55"/><rect x="434.6" y="54.6" width="28.8" height="26.8" rx="1.3" fill="#e5f2f5" stroke="#1b80d8" stroke-width="1.2"/><rect x="435.2" y="55.2" width="27.6" height="3" fill="url(#tb)"/><rect x="443.85" y="58.2" width="1.1" height="22.8" fill="#1b80d8"/><rect x="437" y="61.3" width="2.2" height="1.1" fill="#3a9be8"/><rect x="440.2" y="61.3" width="2.2" height="1.1" fill="#5a5f72"/><rect x="437" y="64.3" width="2.2" height="1.1" fill="#3a9be8"/><rect x="440.2" y="64.3" width="2.2" height="1.1" fill="#5a5f72"/><rect x="437" y="67.3" width="2.2" height="1.1" fill="#3a9be8"/><rect x="440.2" y="67.3" width="2.2" height="1.1" fill="#5a5f72"/><rect x="437" y="70.3" width="2.2" height="1.1" fill="#3a9be8"/><rect x="440.2" y="70.3" width="2.2" height="1.1" fill="#5a5f72"/><rect x="437" y="73.3" width="2.2" height="1.1" fill="#3a9be8"/><rect x="440.2" y="73.3" width="2.2" height="1.1" fill="#5a5f72"/><rect x="437" y="76.3" width="2.2" height="1.1" fill="#3a9be8"/><rect x="440.2" y="76.3" width="2.2" height="1.1" fill="#5a5f72"/><text x="453.6" y="68.1" font-family="Liberation Sans,sans-serif" font-size="8.2" fill="#2c2c34" text-anchor="middle" textLength="12.6" lengthAdjust="spacingAndGlyphs">KB</text><text x="453.6" y="78" font-family="Liberation Sans,sans-serif" font-size="8.2" fill="#2c2c34" text-anchor="middle" textLength="13.2" lengthAdjust="spacingAndGlyphs">MB</text><rect x="529.6" y="49.6" width="113" height="36.8" fill="#f8f2bf" stroke="#e6b760" stroke-width="1.3"/><rect x="566.4" y="49.6" width="1.8" height="36.8" fill="#e6b760"/><rect x="604.4" y="49.6" width="1.8" height="36.8" fill="#e6b760"/><path d="M533 56h12l3.2 4h14.8v20.6h-30z" fill="url(#fg2)"/><rect x="533" y="56.3" width=".8" height="24.3" fill="#e2ab58"/><rect x="562.2" y="60" width=".8" height="20.6" fill="#e2ab58"/><rect x="533" y="79.4" width="30" height="1.2" fill="#c98a35"/><rect x="536" y="58" width="7.2" height="2.8" fill="#2b9be3"/><path d="M545.5 57l2.6 3.4h-1.5z" fill="#f0d050"/><rect x="535.75" y="67.75" width="10.4" height="10.2" rx="1" fill="#e6f1f5" stroke="#7a8a92" stroke-width="1.3"/><rect x="549.95" y="67.75" width="10.4" height="10.2" rx="1" fill="#e6f1f5" stroke="#7a8a92" stroke-width="1.3"/><path d="M571 56h12l3.2 4h14.8v20.6h-30z" fill="url(#fg2)"/><rect x="571" y="56.3" width=".8" height="24.3" fill="#e2ab58"/><rect x="600.2" y="60" width=".8" height="20.6" fill="#e2ab58"/><rect x="571" y="79.4" width="30" height="1.2" fill="#c98a35"/><rect x="574" y="58" width="7.2" height="2.8" fill="#2b9be3"/><path d="M583.5 57l2.6 3.4h-1.5z" fill="#f0d050"/><rect x="573.75" y="67.75" width="10.4" height="10.2" rx="1" fill="#e6f1f5" stroke="#7a8a92" stroke-width="1.3"/><path d="M576.11 73.17l2.31 2.42l4.2 -5.25" fill="none" stroke="#1a9e1a" stroke-width="2.1" stroke-linejoin="miter"/><rect x="587.95" y="67.75" width="10.4" height="10.2" rx="1" fill="#e6f1f5" stroke="#7a8a92" stroke-width="1.3"/><path d="M590.31 73.17l2.31 2.42l4.2 -5.25" fill="none" stroke="#1a9e1a" stroke-width="2.1" stroke-linejoin="miter"/><path d="M609 56h12l3.2 4h14.8v20.6h-30z" fill="url(#fg2)"/><rect x="609" y="56.3" width=".8" height="24.3" fill="#e2ab58"/><rect x="638.2" y="60" width=".8" height="20.6" fill="#e2ab58"/><rect x="609" y="79.4" width="30" height="1.2" fill="#c98a35"/><rect x="612" y="58" width="7.2" height="2.8" fill="#2b9be3"/><path d="M621.5 57l2.6 3.4h-1.5z" fill="#f0d050"/><rect x="611.75" y="67.75" width="10.4" height="10.2" rx="1" fill="#e6f1f5" stroke="#7a8a92" stroke-width="1.3"/><path d="M614.11 73.17l2.31 2.42l4.2 -5.25" fill="none" stroke="#1a9e1a" stroke-width="2.1" stroke-linejoin="miter"/><rect x="625.95" y="67.75" width="10.4" height="10.2" rx="1" fill="#e6f1f5" stroke="#7a8a92" stroke-width="1.3"/><path d="M26 99.2h12l3.2 4h14.8v20.6h-30z" fill="url(#fg)"/><rect x="26" y="99.5" width=".8" height="24.3" fill="#e2ab58"/><rect x="55.2" y="103.2" width=".8" height="20.6" fill="#e2ab58"/><rect x="26" y="122.6" width="30" height="1.2" fill="#c98a35"/><rect x="29" y="101.2" width="7.2" height="2.8" fill="#2b9be3"/><path d="M38.5 100.2l2.6 3.4h-1.5z" fill="#f0d050"/><path d="M35 113.4L38.2 109.5L38.7 111.6C42.2 110.5 45.6 112.3 47.1 115.9C44.6 114.3 42 113.9 39.3 114.7L39.9 117Z" fill="#3a72c2"/><path d="M64 99.2h12l3.2 4h14.8v20.6h-30z" fill="url(#fg)"/><rect x="64" y="99.5" width=".8" height="24.3" fill="#e2ab58"/><rect x="93.2" y="103.2" width=".8" height="20.6" fill="#e2ab58"/><rect x="64" y="122.6" width="30" height="1.2" fill="#c98a35"/><rect x="67" y="101.2" width="7.2" height="2.8" fill="#2b9be3"/><path d="M76.5 100.2l2.6 3.4h-1.5z" fill="#f0d050"/><path d="M85 113.4L81.8 109.5L81.3 111.6C77.8 110.5 74.4 112.3 72.9 115.9C75.4 114.3 78 113.9 80.7 114.7L80.1 117Z" fill="#3a72c2"/><path d="M119 99.2h11l3.2 4h15.7v8h-29.9z" fill="#e0b9a1"/><rect x="122" y="101.2" width="7.2" height="2.8" fill="#2b9be3"/><path d="M130.6 100.2l2.6 3.4h-1.5z" fill="#f0d050"/><rect x="121.8" y="105.9" width="24.2" height="3.3" fill="#eaf5f8"/><path d="M117.8 109.1h32.5l-2.3 14.8h-27.9z" fill="url(#fg3)"/><path d="M117.8 109.500h32.500" stroke="#dfa560" stroke-width=".9"/><rect x="120.2" y="122.7" width="27.8" height="1.2" fill="#c98a35"/><rect x="129.6" y="112.8" width="8.8" height="8.5" rx="0.8" fill="#e8f2f6" stroke="#6f7882" stroke-width="1.2"/><path d="M134 113.6l3.6 3.8h-2.3v3.2h-2.6v-3.2h-2.3z" fill="#1242a4"/><path d="M157 99.2h11l3.2 4h15.7v8h-29.9z" fill="#e0b9a1"/><rect x="160" y="101.2" width="7.2" height="2.8" fill="#2b9be3"/><path d="M168.6 100.2l2.6 3.4h-1.5z" fill="#f0d050"/><rect x="159.8" y="105.9" width="24.2" height="3.3" fill="#eaf5f8"/><path d="M155.8 109.1h32.5l-2.3 14.8h-27.9z" fill="url(#fg3)"/><path d="M155.8 109.500h32.500" stroke="#dfa560" stroke-width=".9"/><rect x="158.2" y="122.7" width="27.8" height="1.2" fill="#c98a35"/><rect x="167.6" y="112.8" width="8.8" height="8.5" rx="0.8" fill="#e8f2f6" stroke="#6f7882" stroke-width="1.2"/><path d="M172 120.6l3.6-3.8h-2.3v-3.2h-2.6v3.2h-2.3z" fill="#1242a4"/><path d="M203.7 95.8h15.9l8.6 8.6v19.4h-24.5z" fill="#e5f2f5" stroke="#6d7c72" stroke-width="1"/><path d="M219.6 96.1v7.1q0 1.2 1.2 1.2h6.8" fill="#f4fafb" stroke="#6d7c72" stroke-width="0.7" stroke-opacity=".7"/><rect x="214.3" y="103" width="3.7" height="18.2" fill="url(#arr)"/><path d="M206.4 111.2l9.8-10.6l9.8 10.6" fill="none" stroke="#4a7fd2" stroke-width="3.4"/><rect x="200.8" y="115" width="10.4" height="9.8" rx="0" fill="#e7f2f5" stroke="#6d7c72" stroke-width="1.2"/><path d="M241.7 95.8h16l8.6 8.6v19.4h-24.6z" fill="#e5f2f5" stroke="#6d7c72" stroke-width="1"/><path d="M257.7 96.1v7.1q0 1.2 1.2 1.2h6.8" fill="#f4fafb" stroke="#6d7c72" stroke-width="0.7" stroke-opacity=".7"/><rect x="252.3" y="100.8" width="3.7" height="18" fill="url(#arr2)"/><path d="M244.8 110.8l9.4 10.2l9.4-10.2" fill="none" stroke="#3f74cc" stroke-width="3.4"/><rect x="238.9" y="115" width="10" height="9.8" rx="0" fill="#e7f2f5" stroke="#6d7c72" stroke-width="1.2"/><path d="M300 101.2h12l3.2 4h14.6v20.4h-29.8z" fill="url(#fg)"/><rect x="300" y="101.5" width=".8" height="24.1" fill="#e2ab58"/><rect x="329" y="105.2" width=".8" height="20.4" fill="#e2ab58"/><rect x="300" y="124.4" width="29.8" height="1.2" fill="#c98a35"/><rect x="303" y="103.2" width="7.2" height="2.8" fill="#2b9be3"/><path d="M312.5 102.2l2.6 3.4h-1.5z" fill="#f0d050"/><rect x="304.65" y="113.75" width="8.7" height="8.3" rx="1" fill="#eaf4f7" stroke="#7a8a92" stroke-width="1.1"/><path d="M306.48 118.16l1.98 2.07l3.6 -4.5" fill="none" stroke="#1a9e1a" stroke-width="1.9" stroke-linejoin="miter"/><rect x="316.75" y="113.75" width="8.7" height="8.3" rx="1" fill="#eaf4f7" stroke="#7a8a92" stroke-width="1.1"/><path d="M318.58 118.16l1.98 2.07l3.6 -4.5" fill="none" stroke="#1a9e1a" stroke-width="1.9" stroke-linejoin="miter"/><rect x="318.1" y="95.9" width="13.9" height="13.9" rx="3" fill="url(#gear)"/><g transform="translate(325.05 102.9)" fill="#f4f8fc"><rect x="-1.1" y="-5" width="2.2" height="3.2" transform="rotate(0)"/><rect x="-1.1" y="-5" width="2.2" height="3.2" transform="rotate(45)"/><rect x="-1.1" y="-5" width="2.2" height="3.2" transform="rotate(90)"/><rect x="-1.1" y="-5" width="2.2" height="3.2" transform="rotate(135)"/><rect x="-1.1" y="-5" width="2.2" height="3.2" transform="rotate(180)"/><rect x="-1.1" y="-5" width="2.2" height="3.2" transform="rotate(225)"/><rect x="-1.1" y="-5" width="2.2" height="3.2" transform="rotate(270)"/><rect x="-1.1" y="-5" width="2.2" height="3.2" transform="rotate(315)"/><circle r="3.3"/><circle r="1.5" fill="#4a72d0"/></g><path d="M347.6 95.8h16l9.2 9.2v19h-25.2z" fill="#e5f2f5" stroke="#a6aeb8" stroke-width="1"/><path d="M363.6 96.1v7.7q0 1.2 1.2 1.2h7.4" fill="#f4fafb" stroke="#a6aeb8" stroke-width="0.7" stroke-opacity=".7"/><rect x="347.68" y="113.78" width="10.45" height="10.35" rx="0" fill="#e7f2f6" stroke="#1c52a8" stroke-width="1.15"/><path d="M350.1 119l2.2 2.3l4 -5" fill="none" stroke="#1a9e1a" stroke-width="2.0" stroke-linejoin="miter"/><path d="M396.8 95.8h15.6l9.2 9.2v19h-24.8z" fill="#e5f2f5" stroke="#a6aeb8" stroke-width="1"/><path d="M412.4 96.1v7.7q0 1.2 1.2 1.2h7.4" fill="#f4fafb" stroke="#a6aeb8" stroke-width="0.7" stroke-opacity=".7"/><rect x="396.68" y="113.78" width="10.65" height="10.35" rx="0" fill="#e7f2f6" stroke="#1c52a8" stroke-width="1.15"/><path d="M449.1 99.2h12l3.2 4h14.6v20.6h-29.8z" fill="url(#fg)"/><rect x="449.1" y="99.5" width=".8" height="24.3" fill="#e2ab58"/><rect x="478.1" y="103.2" width=".8" height="20.6" fill="#e2ab58"/><rect x="449.1" y="122.6" width="29.8" height="1.2" fill="#c98a35"/><rect x="452.1" y="101.2" width="7.2" height="2.8" fill="#2b9be3"/><path d="M461.6 100.2l2.6 3.4h-1.5z" fill="#f0d050"/><rect x="467.77" y="112.78" width="10.55" height="10.45" rx="0" fill="#e7f2f6" stroke="#1c52a8" stroke-width="1.15"/><path d="M470.2 118l2.2 2.3l4 -5" fill="none" stroke="#1a9e1a" stroke-width="2.0" stroke-linejoin="miter"/><path d="M487 99.2h12l3.2 4h14.7v20.6h-29.9z" fill="url(#fg)"/><rect x="487" y="99.5" width=".8" height="24.3" fill="#e2ab58"/><rect x="516.1" y="103.2" width=".8" height="20.6" fill="#e2ab58"/><rect x="487" y="122.6" width="29.9" height="1.2" fill="#c98a35"/><rect x="490" y="101.2" width="7.2" height="2.8" fill="#2b9be3"/><path d="M499.5 100.2l2.6 3.4h-1.5z" fill="#f0d050"/><rect x="505.68" y="112.78" width="10.65" height="10.45" rx="0" fill="#e7f2f6" stroke="#1c52a8" stroke-width="1.15"/><rect x="531.58" y="103.58" width="11.85" height="11.65" rx="0" fill="#e7f2f6" stroke="#1c52a8" stroke-width="1.15"/><path d="M534.62 109.54l2.42 2.53l4.4 -5.5" fill="none" stroke="#1a9e1a" stroke-width="2.1" stroke-linejoin="miter"/><rect x="548.58" y="103.58" width="11.85" height="11.65" rx="0" fill="#e7f2f6" stroke="#1c52a8" stroke-width="1.15"/><path d="M551 100.4c-1.6-3-4.4-4.2-7.4-3.6v-2.4l-4.6 3.6l4.6 3.8v-2.4c2.6-.4 5 .1 7.400 1z" fill="#3d78c6"/><path d="M540.4 118.4c1.600 3 4.400 4.200 7.400 3.600v2.400l4.600-3.600l-4.600-3.800v2.400c-2.600 .4-5-.1-7.400-1z" fill="#3d78c6"/><path d="M574.2 113.400l11.600-11l3.600 8.600l-7.400 8.800l-7-.4z" fill="#c3c6d1"/><path d="M586.500 108.500c3.500-4.800 9.500-5.200 13-1c3 3.800 2.600 8.600 .4 14" fill="none" stroke="#c3c6d1" stroke-width="8.200" stroke-linecap="butt"/><path d="M585.500 107.600c4-4 9.600-4 12.800-.4" fill="none" stroke="#8f9fbb" stroke-width="1.600"/><path d="M577.200 115.600l8.600-7.400l2.600 3.800l-7.800 6.600z" fill="#9ea8c3"/><path d="M578 114.800l7-5.400" stroke="#9a98c8" stroke-width="1.500"/><path d="M598 109.500c2.200 3.200 2 7.600 .8 11.200l-2.600-.8c1-3.400 1.200-6.600 0-9.400z" fill="#9496c6"/><path d="M600.800 108.800c2 3.600 1.400 8.400-.2 12" fill="none" stroke="#9fb0c4" stroke-width="1.400"/><rect x="652.2" y="95" width="21.6" height="3.6" fill="#6d82ba"/><rect x="652.2" y="98.400" width="21.6" height="14" fill="#a9d9f8"/><path d="M652.2 112h21.600l1 8.400h-23.6z" fill="#f2f8fb"/><rect x="652" y="120" width="22" height="2.500" fill="#7b88bb"/><rect x="653.5" y="114.2" width="17" height="1" fill="#9aa2b4"/><rect x="653.5" y="116.800" width="14" height="1" fill="#9aa2b4"/><text x="659.300" y="111.400" font-family="Liberation Serif,serif" font-size="14.500" font-weight="700" fill="#f08214" text-anchor="middle">A</text><rect x="664.500" y="102.600" width="6.5" height="1.100" fill="#3f78cc"/><rect x="664.500" y="104.800" width="6.5" height="1.100" fill="#3f78cc"/><rect x="665.500" y="107" width="5.500" height="1.100" fill="#3f78cc"/><path d="M664.500 112l2.500-3.500l2 2.500l1.500-1.500l2.500 2.500z" fill="#e8eef4"/><circle cx="702.700" cy="109.800" r="12.600" fill="url(#ieg)" stroke="#2a86dc" stroke-width=".9"/><path d="M696.300 106.900q.2-4.700 5.800-4.700q5.600 0 5.800 4.700z" fill="#d5dae8" stroke="#2a78d0" stroke-width=".7"/><path d="M696.300 112.500h20v1.800h-8.200q-1.200 4.500-5.800 4.500q-4.800 0-6-4.500z" fill="#d5dae8"/><path d="M696.300 112.500h19.500M716 114.300h-7.900q-1.200 4.500-5.800 4.500q-4.800 0-6-4.500" fill="none" stroke="#2a78d0" stroke-width=".7"/><path d="M708.500 114.400h8v7l-3.500 1.800z" fill="#d5dae8" opacity="0"/><path d="M691.200 124c-4.500-1.500-5.400-5.500-3.600-10.500c2.400-6.500 9.600-14 17.600-17.200c5-2 8.800-1.400 9.600 1.500c.3 1.200 .2 2.400-.2 3.600" fill="none" stroke="#f6c416" stroke-width="2.800" stroke-linecap="round"/><path d="M689.200 113.500c2.600-6 9-12.600 16.200-15.800" fill="none" stroke="#ffe25a" stroke-width="1" stroke-linecap="round"/><rect x="729" y="100.200" width="21.800" height="21.800" rx="1" fill="#b9dcf5"/><rect x="727" y="99.800" width="21.800" height="22.600" rx="1" fill="#9fd0f2"/><rect x="725.400" y="99.600" width="21.400" height="23.200" rx="1" fill="#9bd0f4" stroke="#5a9ee2" stroke-width=".8"/><circle cx="735.400" cy="110.800" r="8.300" fill="#f28c26"/><path d="M727.800 113.500a8 8 0 0 0 14 2.500z" fill="#e84c2c" opacity=".8"/><path d="M731.900 105.100l9.500 5.800l-9.500 5.900z" fill="#eef6fa"/><rect x="763.400" y="98.200" width="27.400" height="22.300" fill="#f2f7fa" stroke="#8ea0b8" stroke-width=".8"/><rect x="764.6" y="99.4" width="25" height="19.9" fill="url(#sky)"/><path d="M767.1 103.78q5 -2.39 10.5 0t10 0.99v2.39h-20z" fill="#eef6fb" opacity=".75"/><path d="M764.6 106.96q5.5 -0.4 12.5 3.18t12.5 2.39v1.99h-25z" fill="#3c7450"/><path d="M764.6 109.35q7.5 0.4 17.5 3.98h-17.5z" fill="#2a5340"/><path d="M764.6 113.33h25v5.97h-25z" fill="#3a6fc2"/><path d="M775.85 114.92h12.5v1.99h-12.5z" fill="#7fb2e6" opacity=".6"/><path d="M762.2 96.9h6.5v2.2h-4.3v4h-2.2z" fill="#3c74b8"/><path d="M792 96.9h-6.5v2.2h4.3v4h2.2z" fill="#3c74b8"/><path d="M762.2 121.7h6.5v-2.2h-4.3v-4h-2.2z" fill="#3c74b8"/><path d="M792 121.7h-6.5v-2.2h4.3v-4h2.2z" fill="#3c74b8"/><path d="M806 115.500h18l3 6.300q-12 2.800-24 0z" fill="#bcc0d2"/><path d="M813.500 96.800q1.500-1.400 3 0l5.400 19.200q-6.900 2.200-13.800 0z" fill="#b5b9ce"/><path d="M812.500 100.600h5l1 3.600h-7z M810.300 108.400h9.400l1.200 4.200h-11.800z" fill="#e6e9f2"/><rect x="802.700" y="122.900" width="24.700" height="1.500" fill="#e2e5ef"/><rect x="838.600" y="98.300" width="29" height="22.500" fill="#f4f8fa" stroke="#b8c0cc" stroke-width=".8"/><rect x="839.8" y="99.4" width="26.6" height="20.2" fill="url(#sky)"/><path d="M842.46 103.84q5.32 -2.42 11.17 0t10.64 1.01v2.42h-21.28z" fill="#eef6fb" opacity=".75"/><path d="M839.8 107.08q5.85 -0.4 13.3 3.23t13.3 2.42v2.02h-26.6z" fill="#3c7450"/><path d="M839.8 109.5q7.98 0.4 18.62 4.04h-18.62z" fill="#2a5340"/><path d="M839.8 113.54h26.6v6.06h-26.6z" fill="#3a6fc2"/><path d="M851.77 115.16h13.3v2.02h-13.3z" fill="#7fb2e6" opacity=".6"/><text x="856.500" y="108.200" font-family="Liberation Sans,sans-serif" font-size="9.400" fill="#1e2630" text-anchor="middle" textLength="20.500" lengthAdjust="spacingAndGlyphs">EXIF</text><rect x="875" y="94" width="2" height="32" fill="#f01414"/><rect x="877" y="94" width="2" height="32" fill="#18b018"/><rect x="879" y="94" width="2" height="32" fill="#1830e8"/><circle cx="888.200" cy="110.200" r="4.400" fill="#141414"/><text x="888.200" y="112.800" font-family="Liberation Sans,sans-serif" font-size="7" font-weight="700" fill="#8a8a8a" text-anchor="middle">?</text><path d="M892.500 100.500a11.200 11.200 0 0 1 0 19.500a13.500 13.500 0 0 0 0-19.500z" fill="#141414" stroke="#141414" stroke-width="1.300" stroke-linejoin="round"/><path d="M896 94.500a17.500 17.500 0 0 1 0 31.400a21.500 21.500 0 0 0 0-31.400z" fill="#141414" stroke="#141414" stroke-width="1.600" stroke-linejoin="round"/></svg><svg style="left:0;top:0;z-index:8" width="1117" height="634" viewBox="0 0 1117 634"><path d="M727.6 246.8h7.8l4 4v10.2h-11.8z" fill="#e8f3f6" stroke="#bfb3ad" stroke-width=".9"/><path d="M727.6 261h11.8v-10.2" fill="none" stroke="#6c6c72" stroke-width=".9"/><path d="M735.4 246.8v4h4" fill="none" stroke="#bfb3ad" stroke-width=".7"/><rect x="726.6" y="255.8" width="5.6" height="5.6" fill="#f2f7fa" stroke="#0a0a0a" stroke-width="1.200"/><path d="M728.2 257.4v2.300h2.300v-2.600" fill="none" stroke="#222" stroke-width=".9"/><path d="M727.6 271.9h7.8l4 4v10.2h-11.8z" fill="#e8f3f6" stroke="#bfb3ad" stroke-width=".9"/><path d="M727.6 286.1h11.8v-10.2" fill="none" stroke="#6c6c72" stroke-width=".9"/><path d="M735.4 271.9v4h4" fill="none" stroke="#bfb3ad" stroke-width=".7"/><path d="M735.600 274.600l-4.200 5.600h2.700l-2.300 5l5.800-6.400h-2.800l2.600-4.200z" fill="#f9cf20" stroke="#e89a18" stroke-width=".5"/><path d="M732.150 303.400l.2-6.700q.8-.9 1.500 .1l.25 6.500z" fill="#c6c2d6"/><rect x="732.300" y="296.400" width="1.500" height="2.300" fill="#ecb9a0" opacity=".8"/><path d="M732 303l-3.600-4.500" stroke="#9aa2b4" stroke-width="1" stroke-dasharray="1.300 .7" fill="none"/><circle cx="728.500" cy="298.500" r=".85" fill="#ecb9a0"/><ellipse cx="731.400" cy="308.200" rx="1.350" ry="2.700" fill="none" stroke="#3a54c4" stroke-width="1.150" transform="rotate(8 731.400 308.200)"/><path d="M732.500 303.800l-.4 2" stroke="#3a54c4" stroke-width="1.200"/><path d="M733 304l3 2.300" stroke="#3466cc" stroke-width="1.500"/><ellipse cx="738.100" cy="307" rx="2.300" ry="1.600" fill="none" stroke="#3a54c4" stroke-width="1.150" transform="rotate(28 738.100 307)"/><circle cx="732.800" cy="303.500" r=".95" fill="#1a80e0"/><circle cx="731.400" cy="303.500" r=".6" fill="#f0b030"/><path d="M727.6 321.8h7.8l4 4v10.4h-11.8z" fill="#e8f3f6" stroke="#bfb3ad" stroke-width=".9"/><path d="M727.6 336.2h11.8v-10.4" fill="none" stroke="#6c6c72" stroke-width=".9"/><path d="M735.4 321.8v4h4" fill="none" stroke="#bfb3ad" stroke-width=".7"/><path d="M733.500 325.400v7.600M730.800 328.400l2.700-3l2.700 3" fill="none" stroke="#0a0a0a" stroke-width="1.300"/><path d="M729.500 346.800h4.500l3 3v8.500h-7.500z" fill="#e8f3f6" stroke="#6e7e76" stroke-width=".9"/><path d="M732.800 349.600h4l3.600 3.600v7.300h-7.600z" fill="#e8f3f6" stroke="#6e7e76" stroke-width=".9"/><rect x="727.7" y="355.8" width="5.6" height="5.6" fill="#f2f7fa" stroke="#0a0a0a" stroke-width="1.200"/><path d="M729.3 357.4v2.300h2.300v-2.600" fill="none" stroke="#222" stroke-width=".9"/><path d="M726.6 371.1q0-1.500 1.500-1.500h4l1.500 1.600h7q1.400 0 1.400 1.400v8.400h-15.400z" fill="url(#yf)" stroke="#d8b050" stroke-width=".6"/><rect x="736.6" y="370" width="3.600" height="1.300" fill="#3aa0e8"/><path d="M727.1 373.6h14.400" stroke="#fbf3c8" stroke-width=".8"/><rect x="736" y="376.7" width="5.6" height="5.6" fill="#f2f7fa" stroke="#0a0a0a" stroke-width="1.200"/><path d="M737.6 378.3v2.300h2.300v-2.600" fill="none" stroke="#222" stroke-width=".9"/><path d="M726.6 418.1q0-1.500 1.500-1.500h4l1.500 1.600h7q1.400 0 1.400 1.400v8.400h-15.400z" fill="url(#yf)" stroke="#d8b050" stroke-width=".6"/><rect x="736.6" y="417" width="3.600" height="1.300" fill="#3aa0e8"/><path d="M727.1 420.6h14.400" stroke="#fbf3c8" stroke-width=".8"/><rect x="736" y="423.7" width="5.6" height="5.6" fill="#f2f7fa" stroke="#0a0a0a" stroke-width="1.200"/><path d="M727.800 464.600l11.600 11.400M739.400 464.600l-11.600 11.400" stroke="#ee1020" stroke-width="3.400" stroke-linecap="round"/><path d="M728.600 487.500h10.800l-1.100 11.600h-8.600z" fill="#eef4f6" stroke="#1e1e22" stroke-width="1.200"/><path d="M727.300 487.200h13.400" stroke="#1e1e22" stroke-width="1.500"/><path d="M731.800 486.600v-1.800h4.400v1.800" fill="none" stroke="#1e1e22" stroke-width="1.100"/><path d="M731.800 489.800v7.200M734 489.800v7.200M736.200 489.800v7.200" stroke="#1e1e22" stroke-width="1"/><path d="M727.200 510.800h14.800l-5.700 6.400v5.600l-3.400-1.600v-4z" fill="url(#fun)" stroke="#5c7c9c" stroke-width=".6"/><path d="M728 511.300h13.200" stroke="#c8d8e8" stroke-width="1"/><path d="M727.600 534.600h7.400l4.200 4.200v10.200h-11.600z" fill="#eef5f7" stroke="#53635b" stroke-width="1"/><path d="M735 534.600v4.200h4.200" fill="none" stroke="#53635b" stroke-width=".8"/><text x="733.500" y="547.300" font-family="Liberation Sans,sans-serif" font-size="8.500" fill="#111" text-anchor="middle">.a</text><rect x="728.300" y="582.600" width="11.600" height="13.200" rx=".8" fill="#b4691e"/><rect x="730" y="584.200" width="8.200" height="10" fill="#f0f6fa"/><rect x="730.800" y="585.4" width="6.600" height=".9" fill="#6aa6e0"/><rect x="730.800" y="587.4" width="6.600" height=".9" fill="#6aa6e0"/><rect x="730.800" y="589.4" width="6.600" height=".9" fill="#6aa6e0"/><rect x="730.800" y="591.4" width="6.600" height=".9" fill="#6aa6e0"/><rect x="731.600" y="581.600" width="5" height="2.300" rx=".6" fill="#3c3c44"/><rect x="726.400" y="606.200" width="15.400" height="14.200" fill="#f2f6fa" stroke="#a4a4cc" stroke-width=".8"/><rect x="726.800" y="609.900" width="14.600" height="3.200" fill="#4a92e2"/><rect x="728" y="607.5" width="1" height="1" fill="#7a7aa0"/><rect x="730" y="607.6" width="10" height=".8" fill="#b8bcd0"/><rect x="728" y="611.0" width="1" height="1" fill="#e8f0fa"/><rect x="730" y="611.1" width="10" height=".8" fill="#b8bcd0"/><rect x="728" y="614.5" width="1" height="1" fill="#444"/><rect x="730" y="614.6" width="10" height=".8" fill="#b8bcd0"/><rect x="728" y="617.8" width="1" height="1" fill="#444"/><rect x="730" y="617.9" width="10" height=".8" fill="#b8bcd0"/></svg>
<span style="left:23.04px;top:5.24px;font-size:12px;color:#000;transform:scaleX(0.9662);">AllDup 4.5.62 - Search Result 'File extension + File size + File content'</span>
<span style="left:30.83px;top:28.84px;font-size:12px;color:#3c3a58;transform:scaleX(0.9224);">Search Result</span>
<span style="left:118.86px;top:28.84px;font-size:12px;color:#3c3a58;transform:scaleX(1.0250);">Columns</span>
<span style="left:184.02px;top:28.84px;font-size:12px;color:#3c3a58;transform:scaleX(1.0177);">Filter</span>
<span style="left:228.88px;top:28.84px;font-size:12px;color:#3c3a58;transform:scaleX(0.9757);">Groups</span>
<span style="left:283.96px;top:28.84px;font-size:12px;color:#3c3a58;transform:scaleX(0.9819);">Process Mode</span>
<span style="left:376.63px;top:28.84px;font-size:12px;color:#3c3a58;transform:scaleX(0.9296);">Select</span>
<span style="left:425.09px;top:28.84px;font-size:12px;color:#3c3a58;transform:scaleX(0.9567);">Deselect</span>
<span style="left:487.06px;top:28.84px;font-size:12px;color:#3c3a58;transform:scaleX(0.9847);">Remove</span>
<span style="left:547.93px;top:28.84px;font-size:12px;color:#3c3a58;transform:scaleX(1.0090);">File Protection</span>
<span style="left:643.04px;top:28.84px;font-size:12px;color:#3c3a58;transform:scaleX(0.9753);">Toolbars</span>
<span style="left:705.89px;top:28.84px;font-size:12px;color:#3c3a58;transform:scaleX(1.0231);">Options</span>
<span style="left:766.75px;top:28.84px;font-size:12px;color:#3c3a58;transform:scaleX(0.6980);">?</span>
<span style="left:495.75px;top:61.64px;font-size:12px;color:#3c3a58;transform:scaleX(0.9876);">Filter:</span>
<span style="left:5.28px;top:137.84px;font-size:12px;color:#1c1a3c;transform:scaleX(0.9778);">Group - File extension</span>
<span style="left:176.44px;top:137.84px;font-size:12px;color:#1c1a3c;transform:scaleX(0.9990);">Path</span>
<span style="left:889.35px;top:137.84px;font-size:12px;color:#1c1a3c;transform:scaleX(0.9922);">Duplicates</span>
<span style="left:959.93px;top:137.84px;font-size:12px;color:#1c1a3c;transform:scaleX(0.9214);">Size (Bytes)</span>
<span style="left:41.66px;top:159.64px;font-size:12px;color:#000;transform:scaleX(0.9542);font-weight:700;">Search Result</span>
<span style="left:76.70px;top:178.64px;font-size:12px;color:#000;transform:scaleX(0.9950);">DAT</span>
<span style="left:76.70px;top:197.64px;font-size:12px;color:#000;transform:scaleX(0.9950);">DAT</span>
<span style="left:76.70px;top:216.64px;font-size:12px;color:#000;transform:scaleX(0.8197);">EXE</span>
<span style="left:76.70px;top:273.64px;font-size:12px;color:#000;transform:scaleX(1.0044);">HTM</span>
<span style="left:76.70px;top:292.64px;font-size:12px;color:#000;transform:scaleX(0.9567);">INF</span>
<span style="left:76.70px;top:311.64px;font-size:12px;color:#000;transform:scaleX(0.9567);">INF</span>
<span style="left:76.70px;top:330.64px;font-size:12px;color:#000;transform:scaleX(0.8173);">JPG</span>
<span style="left:76.70px;top:349.64px;font-size:12px;color:#000;transform:scaleX(0.8173);">JPG</span>
<span style="left:76.70px;top:368.64px;font-size:12px;color:#000;transform:scaleX(0.8173);">JPG</span>
<span style="left:76.70px;top:387.64px;font-size:12px;color:#000;transform:scaleX(0.8173);">JPG</span>
<span style="left:76.70px;top:406.64px;font-size:12px;color:#000;transform:scaleX(0.8173);">JPG</span>
<span style="left:76.70px;top:425.64px;font-size:12px;color:#000;transform:scaleX(0.8173);">JPG</span>
<span style="left:76.70px;top:444.64px;font-size:12px;color:#000;transform:scaleX(0.8173);">JPG</span>
<span style="left:76.70px;top:463.64px;font-size:12px;color:#000;transform:scaleX(0.8173);">JPG</span>
<span style="left:76.70px;top:482.64px;font-size:12px;color:#000;transform:scaleX(0.8173);">JPG</span>
<span style="left:76.70px;top:501.64px;font-size:12px;color:#000;transform:scaleX(0.8173);">JPG</span>
<span style="left:76.70px;top:520.64px;font-size:12px;color:#000;transform:scaleX(0.8173);">JPG</span>
<span style="left:76.70px;top:539.64px;font-size:12px;color:#000;transform:scaleX(0.8173);">JPG</span>
<span style="left:76.70px;top:558.64px;font-size:12px;color:#000;transform:scaleX(0.8173);">JPG</span>
<span style="left:76.70px;top:577.64px;font-size:12px;color:#000;transform:scaleX(0.8173);">JPG</span>
<span style="left:76.70px;top:596.64px;font-size:12px;color:#000;transform:scaleX(0.8173);">JPG</span>
<span style="left:76.70px;top:615.64px;font-size:12px;color:#000;transform:scaleX(0.8173);">JPG</span>
<span style="left:921.68px;top:159.64px;font-size:12px;color:#000;transform:scaleX(0.8823);">1.081</span>
<span style="left:963.71px;top:159.64px;font-size:12px;color:#000;transform:scaleX(0.8993);">2.124.467.777</span>
<span style="left:942.10px;top:178.64px;font-size:12px;color:#000;transform:scaleX(0.8757);">3</span>
<span style="left:993.14px;top:178.64px;font-size:12px;color:#000;transform:scaleX(0.9201);">129.660</span>
<span style="left:942.10px;top:197.64px;font-size:12px;color:#000;transform:scaleX(0.8757);">3</span>
<span style="left:999.87px;top:197.64px;font-size:12px;color:#000;transform:scaleX(0.8938);">14.688</span>
<span style="left:942.12px;top:216.64px;font-size:12px;color:#000;transform:scaleX(0.8755);">2</span>
<span style="left:985.11px;top:216.64px;font-size:12px;color:#000;transform:scaleX(0.8982);">2.098.176</span>
<span style="left:93.70px;top:235.64px;font-size:12px;color:#fff;transform:scaleX(0.9398);">DPInst.exe</span>
<span style="left:177.17px;top:235.64px;font-size:12px;color:#fff;transform:scaleX(0.9912);">C:\Users\JamesPous\Downloads\Bluetooth 5.0 Adapter Installation V1-1\</span>
<span style="left:561.56px;top:235.64px;font-size:12px;color:#fff;transform:scaleX(0.9776);">Bluetooth 5.0 Adapter Installation V1-1\BT_Driver\Win10X64</span>
<span style="left:984.45px;top:235.64px;font-size:12px;color:#fff;transform:scaleX(0.9105);">1.049.088</span>
<span style="left:93.70px;top:254.64px;font-size:12px;color:#000;transform:scaleX(0.9398);">DPInst.exe</span>
<span style="left:177.17px;top:254.64px;font-size:12px;color:#000;transform:scaleX(0.9912);">C:\Users\JamesPous\Downloads\Bluetooth 5.0 Adapter Installation V1-1\</span>
<span style="left:561.56px;top:254.64px;font-size:12px;color:#000;transform:scaleX(0.9776);">Bluetooth 5.0 Adapter Installation V1-1\BT_Driver\Win10X64</span>
<span style="left:754.70px;top:247.64px;font-size:12px;color:#17152f;transform:scaleX(0.9772);z-index:7;">Select/Deselect file</span>
<span style="left:754.70px;top:272.64px;font-size:12px;color:#17152f;transform:scaleX(0.9825);z-index:7;">File actions:</span>
<span style="left:754.70px;top:297.64px;font-size:12px;color:#17152f;transform:scaleX(0.9850);z-index:7;">Remove file from the search result</span>
<span style="left:754.70px;top:322.64px;font-size:12px;color:#17152f;transform:scaleX(1.0271);z-index:7;">Move to the top of the group</span>
<span style="left:754.70px;top:347.64px;font-size:12px;color:#17152f;transform:scaleX(0.9879);z-index:7;">Select all other files at this group</span>
<span style="left:754.70px;top:369.64px;font-size:12px;color:#17152f;transform:scaleX(0.9828);z-index:7;">Select all files with the same path</span>
<span style="left:754.70px;top:391.64px;font-size:12px;color:#17152f;transform:scaleX(0.9927);z-index:7;">Select all files inside the folder structure of this file</span>
<span style="left:754.70px;top:416.64px;font-size:12px;color:#17152f;transform:scaleX(0.9838);z-index:7;">Deselect all files with the same path</span>
<span style="left:754.70px;top:438.64px;font-size:12px;color:#17152f;transform:scaleX(0.9909);z-index:7;">Deselect all files inside the folder structure of this file</span>
<span style="left:754.70px;top:463.64px;font-size:12px;color:#17152f;transform:scaleX(1.0040);z-index:7;">Delete all other files from this group permanently</span>
<span style="left:754.70px;top:485.64px;font-size:12px;color:#17152f;transform:scaleX(0.9965);z-index:7;">Move all other files of this group to the Windows Recycle Bin</span>
<span style="left:754.70px;top:510.64px;font-size:12px;color:#17152f;transform:scaleX(0.9848);z-index:7;">Filter lists:</span>
<span style="left:754.70px;top:535.64px;font-size:12px;color:#17152f;transform:scaleX(1.0160);z-index:7;">Add file extension to the plugin list:</span>
<span style="left:754.70px;top:557.64px;font-size:12px;color:#17152f;transform:scaleX(1.0010);z-index:7;">Remove file extension from the plugin lists</span>
<span style="left:754.70px;top:582.64px;font-size:12px;color:#17152f;transform:scaleX(1.0167);z-index:7;">Copy to the clipboard:</span>
<span style="left:754.70px;top:607.64px;font-size:12px;color:#17152f;transform:scaleX(0.9955);z-index:7;">Open Windows Explorer Context Menu</span>
</div></body></html>
